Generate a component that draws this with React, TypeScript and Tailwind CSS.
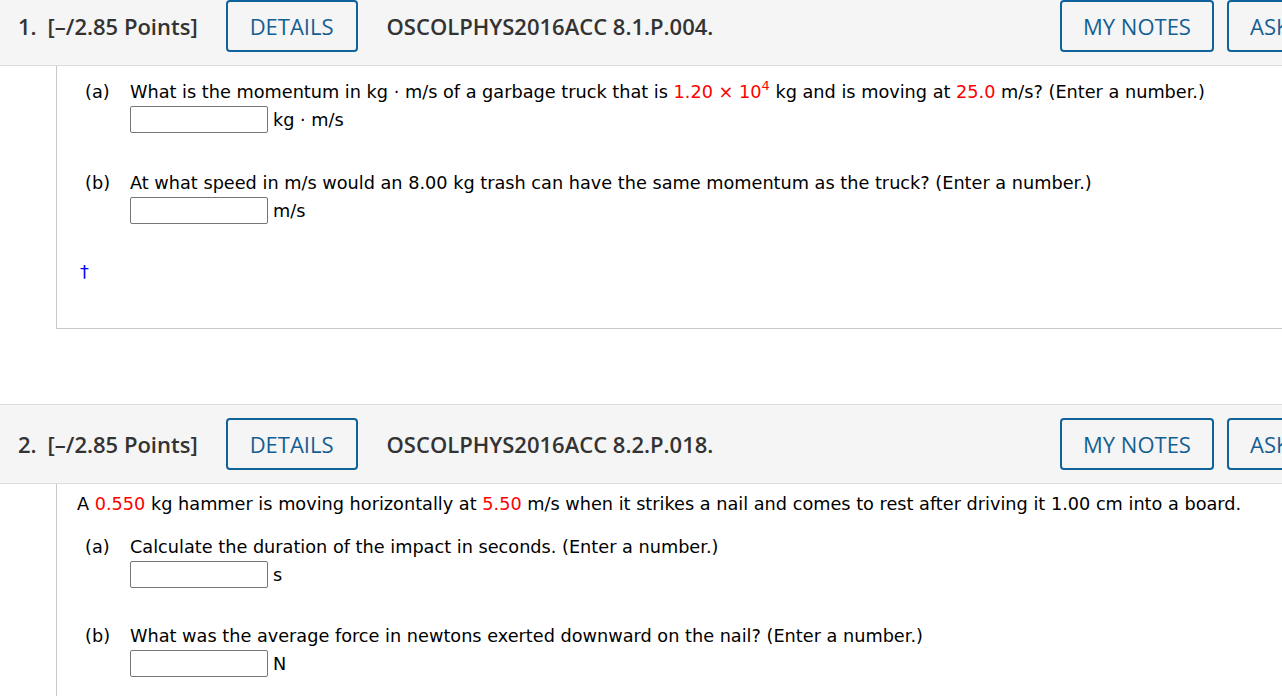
const RED = "text-[#ff0000]";

function Header({ num, code }: { num: string; code: string }) {
  return (
    <div className="flex h-[80px] items-center border-y border-[#dcdcdc] bg-[#f5f5f5] pl-[18px] font-['Open_Sans',sans-serif]">
      <div className="flex shrink-0 items-center text-[22px] font-semibold text-[#333]">
        <span>{num}</span>
        <span className="ml-[11px]">[–/2.85 Points]</span>
      </div>
      <button className="ml-[28px] h-[52px] shrink-0 rounded-[4px] border-2 border-[#10629a] bg-transparent px-[22px] text-[22px] text-[#145f92]">
        DETAILS
      </button>
      <div className="ml-[29px] shrink-0 text-[22px] font-semibold text-[#333]">{code}</div>
      <div className="ml-auto flex w-[222px] shrink-0 gap-[13px]">
        <button className="h-[52px] w-[154px] shrink-0 rounded-[4px] border-2 border-[#10629a] bg-transparent text-[22px] text-[#145f92]">
          MY NOTES
        </button>
        <button className="h-[52px] shrink-0 whitespace-nowrap rounded-[4px] border-2 border-[#10629a] bg-transparent px-[21px] text-[22px] text-[#145f92]">
          ASK YOUR TEACHER
        </button>
      </div>
    </div>
  );
}

function AnswerBox({ unit }: { unit: string }) {
  return (
    <div className="mt-[2px] flex items-center gap-[5px]">
      <input
        type="text"
        className="h-[27px] w-[138px] rounded-[2px] border border-[#767676] bg-white"
      />
      <span>{unit}</span>
    </div>
  );
}

function Part({
  label,
  unit,
  children,
}: {
  label: string;
  unit: string;
  children: React.ReactNode;
}) {
  return (
    <div className="flex">
      <div className="w-[45px] shrink-0">{label}</div>
      <div className="flex flex-col">
        <p className="leading-[24px]">{children}</p>
        <AnswerBox unit={unit} />
      </div>
    </div>
  );
}

export default function App() {
  return (
    <div className="h-[696px] w-[1282px] overflow-hidden bg-white font-['DejaVu_Sans',Verdana,sans-serif] text-[17.7px] leading-[24px] text-black">
      <div className="-mt-[14px]">
        <Header num="1." code="OSCOLPHYS2016ACC 8.1.P.004." />
        <div className="ml-[56px] border-b border-l border-[#c8c8c8] pb-[44px] pl-[28px] pt-[14px]">
          <div className="flex flex-col gap-[38px]">
            <Part label="(a)" unit="kg · m/s">
              What is the momentum in kg · m/s of a garbage truck that is{" "}
              <span className={RED}>
                1.20 × 10<sup className="-top-[0.6em] text-[13px]">4</sup>
              </span>{" "}
              kg and is moving at <span className={RED}>25.0</span> m/s? (Enter a number.)
            </Part>
            <Part label="(b)" unit="m/s">
              At what speed in m/s would an 8.00 kg trash can have the same momentum as the truck? (Enter a number.)
            </Part>
          </div>
          <div className="-ml-[5px] mt-[36px] text-[#0000ff]">†</div>
        </div>
      </div>

      <div className="mt-[75px]">
        <Header num="2." code="OSCOLPHYS2016ACC 8.2.P.018." />
        <div className="ml-[56px] h-[300px] border-l border-[#c8c8c8] pl-[20px] pt-[8px]">
          <p>
            A <span className={RED}>0.550</span> kg hammer is moving horizontally at{" "}
            <span className={RED}>5.50</span> m/s when it strikes a nail and comes to rest after driving it 1.00 cm into a board.
          </p>
          <div className="mt-[19px] flex flex-col gap-[36px] pl-[8px]">
            <Part label="(a)" unit="s">
              Calculate the duration of the impact in seconds. (Enter a number.)
            </Part>
            <Part label="(b)" unit="N">
              What was the average force in newtons exerted downward on the nail? (Enter a number.)
            </Part>
          </div>
        </div>
      </div>
    </div>
  );
}
